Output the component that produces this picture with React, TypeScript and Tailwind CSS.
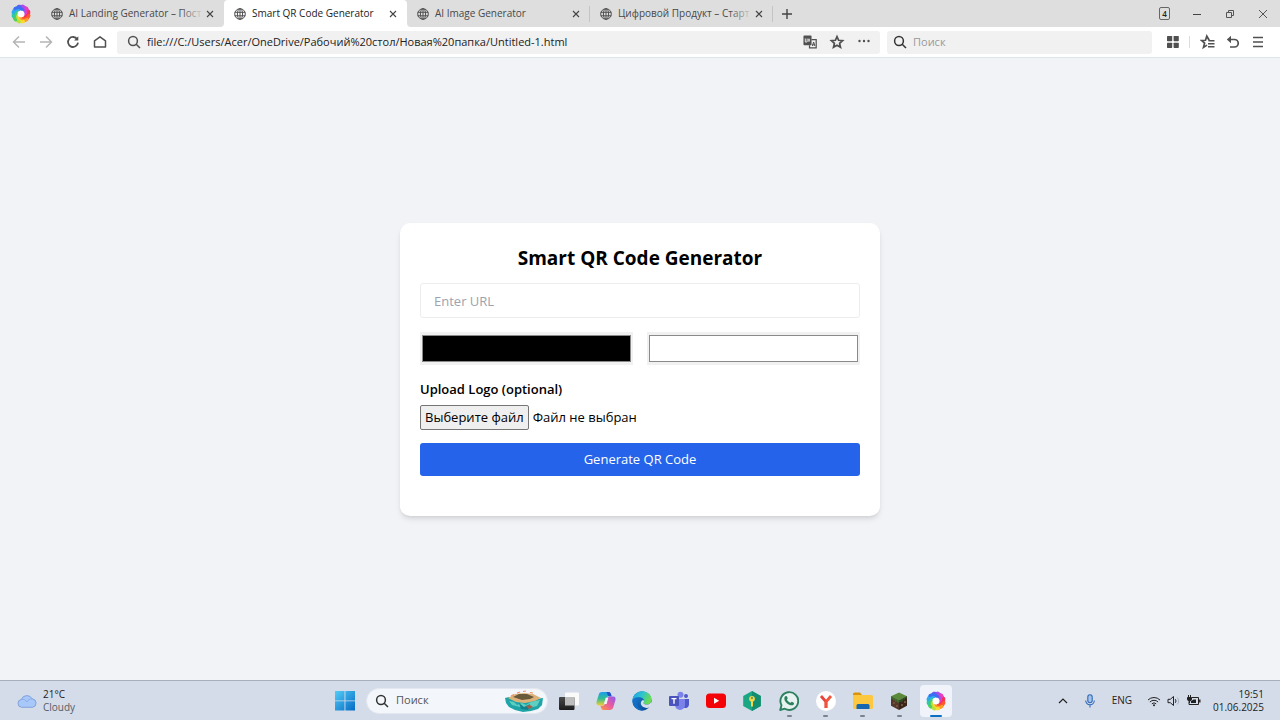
import { useRef, useState } from 'react'
import type { ReactNode } from 'react'

interface TabProps {
  title: string
  active?: boolean
  divider?: boolean
  fade?: boolean
}

function Globe() {
  return (
    <svg viewBox="0 0 12 12" className="w-3 h-3 shrink-0" fill="none" stroke="#505050" strokeWidth="1">
      <circle cx="6" cy="6" r="5.3" />
      <ellipse cx="6" cy="6" rx="2.6" ry="5.3" />
      <path d="M6 .7v10.6M.7 4.3h10.6M.7 7.8h10.6" />
    </svg>
  )
}

const swirlColors = ['#6a5cf0', '#b04be8', '#e83cc0', '#f5305a', '#fb5a2c', '#fc9a29', '#f8dc2e', '#b5e03c', '#4fd05c', '#2fc7a8', '#2fa8f0', '#3d6df2']

function Swirl({ id, className }: { id: string; className: string }) {
  return (
    <svg viewBox="0 0 20 20" className={className}>
      <defs>
        <filter id={id} x="-10%" y="-10%" width="120%" height="120%">
          <feGaussianBlur stdDeviation="0.5" />
        </filter>
      </defs>
      <g filter={`url(#${id})`} fill="none" strokeLinecap="round" strokeWidth="3.2">
        {swirlColors.map((c, i) => (
          <path key={c} stroke={c} transform={`rotate(${i * 30} 10 10)`} d="M7.600 2.300C10.600 2 12.600 3.300 13.200 6.300" />
        ))}
      </g>
      <circle cx="10" cy="10" r="3.300" fill="#fff" filter={`url(#${id})`} />
    </svg>
  )
}

function SearchIcon({ className }: { className: string }) {
  return (
    <svg viewBox="0 0 14 14" className={className} fill="none" stroke="currentColor" strokeWidth="1.5">
      <circle cx="6" cy="6" r="4.4" />
      <path d="M9.2 9.2l3.8 3.8" />
    </svg>
  )
}

function Tab({ title, active, divider, fade }: TabProps) {
  return (
    <div className={`relative flex items-center w-[183px] h-full pl-[10px] pr-2 ${active ? 'bg-white rounded-t-[4px]' : ''}`}>
      <Globe />
      <button className={`relative ml-[6px] flex-1 h-full text-left whitespace-nowrap text-[10px] ${active ? 'text-[#222]' : 'text-[#484848]'}`}>
        {title}
        {fade && <span className="absolute right-0 top-0 h-full w-6 bg-linear-to-r from-transparent to-[#dedede]" />}
      </button>
      <button aria-label="Close tab" className="w-3 h-3 flex items-center justify-center">
        <svg viewBox="0 0 8 8" className="w-2 h-2" stroke="#444" strokeWidth="1.1"><path d="M1 1l6 6M7 1L1 7" /></svg>
      </button>
      {divider && <span className="absolute right-0 top-[6px] h-4 w-px bg-[#c4c4c4]" />}
    </div>
  )
}

function TabBar() {
  return (
    <div className="flex h-[27px] bg-white">
      <div className="flex items-center bg-[#dedede] rounded-br-[4px]">
        <div className="w-[41px] flex justify-center"><Swirl id="swirl-tab" className="w-5 h-5" /></div>
        <Tab title="AI Landing Generator – Пост" fade />
      </div>
      <div className="bg-linear-to-b from-[#dedede] from-50% to-white to-50%">
        <Tab title="Smart QR Code Generator" active />
      </div>
      <div className="flex flex-1 items-center bg-[#dedede] rounded-bl-[4px]">
        <Tab title="AI Image Generator" divider />
        <Tab title="Цифровой Продукт – Старт" divider fade />
        <button aria-label="New tab" className="ml-2">
          <svg viewBox="0 0 12 12" className="w-3 h-3" stroke="#444" strokeWidth="1.4"><path d="M6 1v10M1 6h10" /></svg>
        </button>
        <div className="ml-auto flex items-center pr-[11px] gap-[21px]">
          <button className="w-[11px] h-[13px] border border-[#666] rounded-[2px] flex items-center justify-center text-[8px] leading-none font-semibold text-[#222]">4</button>
          <button aria-label="Minimize">
            <svg viewBox="0 0 12 12" className="w-3 h-3" stroke="#444"><path d="M2 6.500h8" /></svg>
          </button>
          <button aria-label="Restore">
            <svg viewBox="0 0 12 12" className="w-3 h-3" fill="none" stroke="#555"><path d="M2.500 4.500h5v5h-5zM4.500 4.500v-2h5v5h-2" /></svg>
          </button>
          <button aria-label="Close">
            <svg viewBox="0 0 12 12" className="w-3 h-3" stroke="#555"><path d="M2 2l8 8M10 2l-8 8" /></svg>
          </button>
        </div>
      </div>
    </div>
  )
}

function ToolButton({ label, color = 'text-[#505050]', children }: { label: string; color?: string; children: ReactNode }) {
  return (
    <button aria-label={label} className={`w-4 h-4 shrink-0 ${color}`}>
      <svg viewBox="0 0 16 16" className="w-4 h-4" fill="none" stroke="currentColor" strokeWidth="1.5">{children}</svg>
    </button>
  )
}

function Toolbar() {
  const [address, setAddress] = useState('file:///C:/Users/Acer/OneDrive/Рабочий%20стол/Новая%20папка/Untitled-1.html')
  return (
    <div className="flex items-center h-[31px] bg-white border-b border-[#dce4ec] pl-[11px] pr-[14px]">
      <div className="flex gap-[11px]">
        <ToolButton label="Back" color="text-[#b5b5b5]"><path d="M14 8H2.500M8 2.500L2.500 8L8 13.500" /></ToolButton>
        <ToolButton label="Forward" color="text-[#b5b5b5]"><path d="M2 8h11.500M8 2.500L13.500 8L8 13.500" /></ToolButton>
        <ToolButton label="Reload">
          <path d="M12.200 5.200A5 5 0 1 0 13 8.600" strokeWidth="1.8" />
          <path d="M13.300 2.200v4.200H9.100z" fill="currentColor" stroke="none" />
        </ToolButton>
        <ToolButton label="Home"><path d="M2.500 13V6.800L8 2.800l5.500 4V13z" strokeLinejoin="round" /></ToolButton>
      </div>
      <div className="ml-[9px] flex flex-1 items-center h-[23px] bg-[#f1f1f1] rounded-[3px] pl-[10px] pr-2">
        <SearchIcon className="w-[14px] h-[14px] text-[#505050]" />
        <input
          aria-label="Address"
          className="ml-[6px] flex-1 min-w-0 bg-transparent outline-none text-[11px] text-[#222]"
          value={address}
          onChange={e => setAddress(e.target.value)}
        />
        <div className="flex gap-[11px]">
          <ToolButton label="Translate">
            <path d="M2.200 2.200h6.600v8.300H2.200z" fill="currentColor" strokeLinejoin="round" />
            <path d="M9.500 5.600h4.700v8.200H7.500v-2.600" strokeWidth="1.200" />
            <path d="M3.300 4.500v3.500h1.800v-3.500M7 4.500v3.500M6 6h2" stroke="#f1f1f1" strokeWidth=".9" />
            <path d="M10.300 12l1.300-4 1.300 4M10.700 10.800h2" strokeWidth="1" />
          </ToolButton>
          <ToolButton label="Bookmark"><path d="M8 2.600l1.600 3.700 4 .4-3 2.700.9 3.900L8 11.200l-3.500 2.100.9-3.900-3-2.700 4-.4z" strokeWidth="1.700" /></ToolButton>
          <ToolButton label="More">
            <g fill="currentColor" stroke="none"><circle cx="3.500" cy="7" r="1.200" /><circle cx="8" cy="7" r="1.200" /><circle cx="12.500" cy="7" r="1.200" /></g>
          </ToolButton>
        </div>
      </div>
      <div className="ml-[7px] flex items-center w-[265px] h-[23px] bg-[#f1f1f1] rounded-[3px] pl-[6px]">
        <SearchIcon className="w-[14px] h-[14px] text-[#333]" />
        <input aria-label="Search the web" placeholder="Поиск" className="ml-[6px] flex-1 min-w-0 bg-transparent outline-none text-[11px] placeholder:text-[#999]" />
      </div>
      <div className="ml-[13px] flex items-center">
        <ToolButton label="Apps">
          <g fill="currentColor" stroke="none">
            <rect x="2" y="2" width="5.200" height="5.200" rx=".6" /><rect x="8.600" y="2" width="5.200" height="5.200" rx=".6" />
            <rect x="2" y="8.700" width="5.200" height="5.200" rx=".6" /><rect x="8.600" y="8.700" width="5.200" height="5.200" rx=".6" />
          </g>
        </ToolButton>
        <span className="ml-2 mr-[10px] w-px h-3 bg-[#ddd]" />
        <div className="flex gap-[9px]">
          <ToolButton label="Favorites">
            <path d="M9.200 6.300L6.800 2.200 5.500 6.300 1.600 6.500l3 2.600-1.100 4.300 3.500-2.300" strokeWidth="1.700" />
            <path d="M8.500 6.700h6M8 9.700h6.500M8 12.700h6.500" strokeWidth="1.400" />
          </ToolButton>
          <ToolButton label="Undo">
            <path d="M4 5.500h5.500a3.700 3.700 0 0 1 0 7.500H5" strokeWidth="1.700" />
            <path d="M6 1.800v7.400L1.800 5.500z" fill="currentColor" stroke="none" />
          </ToolButton>
          <ToolButton label="Menu"><path d="M3 3.500h10M3 8h10M3 12.500h10" /></ToolButton>
        </div>
      </div>
    </div>
  )
}

function QrCard() {
  const [url, setUrl] = useState('')
  const [dark, setDark] = useState('#000000')
  const [light, setLight] = useState('#ffffff')
  const [fileName, setFileName] = useState('')
  const fileRef = useRef<HTMLInputElement>(null)

  const colorClass =
    'flex-1 min-w-0 h-[33px] appearance-none border border-[#f1f1f1] bg-[#f1f1f1] [&::-webkit-color-swatch-wrapper]:px-px [&::-webkit-color-swatch-wrapper]:py-[2px] [&::-webkit-color-swatch]:border [&::-webkit-color-swatch]:border-[#8a8a8a] [&::-webkit-color-swatch]:rounded-none'

  return (
    <div className="w-full max-w-[480px] bg-white rounded-[10px] shadow-md p-5 text-[13px] text-black">
      <h1 className="pt-[2px] text-center text-[19px] leading-[26px] font-bold">Smart QR Code Generator</h1>
      <input
        type="text"
        aria-label="URL"
        placeholder="Enter URL"
        className="mt-3 block w-full h-[35px] border border-[#ededed] rounded-[3px] px-[13px] pt-[2px] outline-none placeholder:text-[#9ca3af]"
        value={url}
        onChange={e => setUrl(e.target.value)}
      />
      <div className="mt-[14px] flex gap-[14px]">
        <input type="color" aria-label="Code color" className={colorClass} value={dark} onChange={e => setDark(e.target.value)} />
        <input type="color" aria-label="Background color" className={colorClass} value={light} onChange={e => setLight(e.target.value)} />
      </div>
      <label htmlFor="logo" className="mt-[14px] block leading-5 font-semibold">Upload Logo (optional)</label>
      <div className="mt-[6px] flex items-center">
        <input ref={fileRef} id="logo" type="file" className="hidden" onChange={e => setFileName(e.target.files?.[0]?.name ?? '')} />
        <button
          onClick={() => fileRef.current?.click()}
          className="h-[25px] px-1 pt-[2px] border border-[#767676] rounded-[2px] bg-[#efefef]"
        >
          Выберите файл
        </button>
        <span className="ml-1 pt-[2px]">{fileName || 'Файл не выбран'}</span>
      </div>
      <button className="mt-[13px] mb-5 block w-full h-[33px] pt-[2px] rounded-[3px] bg-[#2563eb] text-white">Generate QR Code</button>
    </div>
  )
}

function TaskItem({ label, running, active, children }: { label: string; running?: boolean; active?: boolean; children: ReactNode }) {
  return (
    <button aria-label={label} className={`relative w-8 h-8 flex items-center justify-center rounded-[4px] ${active ? 'bg-[#f0f3f9]' : ''}`}>
      {children}
      {running && <span className="absolute bottom-0 w-[5px] h-[2px] rounded-full bg-[#7d828c]" />}
      {active && <span className="absolute bottom-0 w-3 h-[2px] rounded-full bg-[#0b6fc4]" />}
    </button>
  )
}

function TaskbarApps() {
  return (
    <div className="flex justify-between w-[399px]">
      <TaskItem label="Task view">
        <svg viewBox="0 0 20 20" className="w-5 h-5">
          <defs>
            <linearGradient id="tv" x1="0" y1="0" x2="0" y2="1"><stop stopColor="#4a4a4a" /><stop offset="1" stopColor="#1c1c1c" /></linearGradient>
          </defs>
          <rect x="6" y="1.500" width="14" height="13" rx="1" fill="#fafafa" />
          <rect x="0" y="6" width="15.500" height="13" rx="1" fill="url(#tv)" />
          <path d="M6 6h9.500v8.500H6z" fill="#bdbdbd" />
        </svg>
      </TaskItem>
      <TaskItem label="Copilot">
        <svg viewBox="0 0 20 20" className="w-5 h-5">
          <defs>
            <linearGradient id="cp-a" x1="0" y1="0" x2="0" y2="1"><stop stopColor="#1b9df0" /><stop offset=".5" stopColor="#35bd92" /><stop offset="1" stopColor="#f3cf2f" /></linearGradient>
            <linearGradient id="cp-b" x1="1" y1="0" x2="0" y2="1"><stop stopColor="#8a5cf0" /><stop offset=".5" stopColor="#ea5aa0" /><stop offset="1" stopColor="#fb9a3c" /></linearGradient>
          </defs>
          <path d="M6.200 1h6.300c1.300 0 2 .8 2.400 2l.7 2.300h-2.400c-1.500 0-2.300.8-2.700 2.200L9 12c-.5 1.600-1.300 2.400-3 2.400H2.800C.6 14.400 0 12.600.6 10.600L2.800 3.400C3.300 1.800 4.400 1 6.200 1z" fill="url(#cp-a)" />
          <path d="M13.800 19H7.500c-1.300 0-2-.8-2.400-2l-.7-2.300h2c1.500 0 2.300-.8 2.700-2.200L10.500 8c.5-1.600 1.500-2.600 3.200-2.600h3.500c2.200 0 2.800 1.800 2.200 3.800l-2.200 7.400c-.5 1.600-1.600 2.400-3.400 2.400z" fill="url(#cp-b)" />
          <path d="M10 1h2.500c1.300 0 2 .8 2.400 2l.7 2.300h-2.400C11.400 5.300 11.400 1 10 1z" fill="#2450c8" />
          <path d="M9.700 6.800h2.600L10.600 13H7.900z" fill="#f2f4fa" />
        </svg>
      </TaskItem>
      <TaskItem label="Edge">
        <svg viewBox="0 0 20 20" className="w-5 h-5">
          <defs>
            <linearGradient id="edge-a" x1="0" y1="0" x2="1" y2=".4"><stop stopColor="#1e9be8" /><stop offset=".5" stopColor="#2cc3d0" /><stop offset="1" stopColor="#6bdc53" /></linearGradient>
            <linearGradient id="edge-b" x1="0" y1="0" x2=".7" y2="1"><stop stopColor="#1a86d9" /><stop offset="1" stopColor="#0d4b9a" /></linearGradient>
          </defs>
          <circle cx="10" cy="10" r="9.700" fill="url(#edge-b)" />
          <path d="M.4 9C1 3.800 5 .3 10 .3c5.700 0 9.700 3.900 9.700 8.300 0 3-2.300 5-5.200 5-1.800 0-3-.7-3-1.500 0-.6.700-.8.700-2.200 0-1.800-1.800-3.700-4.700-3.700C4 6.200 1.200 7.500.4 9z" fill="url(#edge-a)" />
          <path d="M11.500 12.100c0 .8 1.200 1.500 3 1.500 2.300 0 4.200-1.200 4.900-3.200L20 14l-2 2.200c-2.800 1.300-6.300.7-8.200-1.400-1.400-1.600-1.300-3.600.2-5.200 1-.9 2.200-.3 2.200.5 0 1.200-.7 1.400-.7 2z" fill="#d6deec" />
          <path d="M.4 9C2 6.600 5 6 7.500 6.200 4.900 7.500 3.700 11 5.300 14.300c1.200 2.600 3.400 4.500 6.300 5.200C5.600 20.200.2 15.600.4 9z" fill="#1172ca" opacity=".75" />
        </svg>
      </TaskItem>
      <TaskItem label="Teams">
        <svg viewBox="0 0 20 20" className="w-5 h-5">
          <circle cx="17" cy="5" r="2" fill="#5059c9" />
          <circle cx="11.500" cy="3.700" r="3" fill="#7b83eb" />
          <path d="M14 8h6v5.500a3.500 3.500 0 0 1-5 3.200z" fill="#5059c9" />
          <path d="M6 8h10v6a5 5 0 0 1-10 0z" fill="#7b83eb" />
          <rect x="0" y="5" width="10" height="10" rx="1" fill="#4b53bc" />
          <path d="M2.500 7.600h5M5 7.600v5.200" stroke="#fff" strokeWidth="1.400" />
        </svg>
      </TaskItem>
      <TaskItem label="YouTube">
        <svg viewBox="0 0 20 20" className="w-5 h-5">
          <rect x="0" y="2.500" width="20" height="14.500" rx="3.500" fill="#f40407" />
          <path d="M8 6.800v6l5.200-3z" fill="#fff" />
        </svg>
      </TaskItem>
      <TaskItem label="Password manager">
        <svg viewBox="0 0 20 20" className="w-5 h-5">
          <path d="M10 0l8.800 5v10L10 20l-8.800-5V5z" fill="#1ba784" />
          <path d="M10 0l8.800 5v10L10 20z" fill="#128d70" />
          <circle cx="10" cy="7.800" r="2.900" fill="#f3d64a" />
          <path d="M9 10h2v5l-1 1-1-1z" fill="#f3d64a" />
          <circle cx="10" cy="7" r=".9" fill="#3a8060" />
        </svg>
      </TaskItem>
      <TaskItem label="WhatsApp" running>
        <svg viewBox="0 0 20 20" className="w-5 h-5">
          <path d="M1.200 19l1.300-4.700A8.900 8.900 0 1 1 5.800 17.700z" fill="#e8f2f0" stroke="#2c8060" strokeWidth="1.900" strokeLinejoin="round" />
          <path d="M6.400 5.300c.6-.6 1.300-.5 1.600.2l.7 1.700c.1.500-.8 1.100-.7 1.500.7 1.400 1.900 2.500 3.400 3.100.5.100 1-1.200 1.500-1l1.800.9c.6.4.3 1.600-.4 2.200-2.500 2-9.900-3-8.900-7.200.1-.600.500-1.100 1-1.400z" fill="#2c8060" />
        </svg>
      </TaskItem>
      <TaskItem label="Yandex" running>
        <svg viewBox="0 0 20 20" className="w-5 h-5">
          <circle cx="10" cy="10" r="10" fill="#fff" />
          <path d="M5 5l5 5.800V17" fill="none" stroke="#e8453c" strokeWidth="2.800" />
          <path d="M15 5l-5 5.800V17" fill="none" stroke="#f0553c" strokeWidth="2.800" />
        </svg>
      </TaskItem>
      <TaskItem label="File Explorer" running>
        <svg viewBox="0 0 20 20" className="w-5 h-5">
          <path d="M0 3a1.500 1.500 0 0 1 1.500-1.500H7L9 4H0z" fill="#d9930c" />
          <path d="M0 4h18.500A1.500 1.500 0 0 1 20 5.500v11a1.500 1.500 0 0 1-1.500 1.500h-17A1.500 1.500 0 0 1 0 16.500z" fill="#fcc840" />
          <path d="M3.500 18v-3.500A1.500 1.500 0 0 1 5 13h10a1.500 1.500 0 0 1 1.500 1.500V18z" fill="#1766b0" />
        </svg>
      </TaskItem>
      <TaskItem label="Minecraft" running>
        <svg viewBox="0 0 20 20" className="w-5 h-5">
          <path d="M10 1.500l8 3.800L10 9.500 2 5.300z" fill="#5b8a3a" />
          <path d="M2 5.300l8 4.200V19l-8-4.300z" fill="#54382a" />
          <path d="M18 5.300l-8 4.200V19l8-4.300z" fill="#3a251b" />
          <path d="M2 5.300l8 4.200v2.300l-2-.3v-1L6 10.800V9.200l-2 .3V8l-2 .2z" fill="#3f6a2b" />
          <path d="M18 5.300l-8 4.200v2.300l2-1.200v1l2-1.800V8.500l2 .3V7.500l2-.2z" fill="#2f4f22" />
          <path d="M4 11h2v2H4zM12 13h2v2h-2zM15 10h2v2h-2zM7 14h2v2H7z" fill="#73503a" />
        </svg>
      </TaskItem>
      <TaskItem label="Browser" active><Swirl id="swirl-task" className="w-5 h-5" /></TaskItem>
    </div>
  )
}

function Taskbar() {
  return (
    <footer className="flex items-center h-10 border-t border-[#a9afba] bg-[#d5dce9] pl-[17px] pr-4 text-[10px] text-[#222]">
      <div className="flex flex-1 items-center gap-[6px]">
        <svg viewBox="0 0 20 14" className="w-5 h-[14px]">
          <path d="M4.500 13.300a4 4 0 0 1-.2-7.900A6 6 0 0 1 15.200 4.800a4.300 4.300 0 0 1 .4 8.500z" fill="#a9c8fa" stroke="#7395d4" strokeWidth=".8" />
          <path d="M4.300 5.400c2.600-.6 4.600.700 5.500 2.600 1.600-2.400 3.300-3.200 5.400-3.200" fill="none" stroke="#87a8e2" strokeWidth=".9" />
        </svg>
        <div className="leading-[13px]">
          <p>21°C</p>
          <p className="text-[#555b66]">Cloudy</p>
        </div>
      </div>
      <div className="flex items-center gap-[5px]">
        <button aria-label="Start" className="w-8 h-8 flex items-center justify-center">
          <svg viewBox="0 0 20 20" className="w-5 h-5">
            <defs>
              <linearGradient id="win" x1="0" y1="0" x2="1" y2="1"><stop stopColor="#52cdf8" /><stop offset="1" stopColor="#0669c4" /></linearGradient>
            </defs>
            <path d="M0 0h9.500V9.500H0zM10.400 0H20V9.500h-9.600zM0 10.300h9.500V19.500H0zM10.400 10.300H20V19.500h-9.600z" fill="url(#win)" />
          </svg>
        </button>
        <div className="flex items-center w-[182px] h-[26px] rounded-full bg-[#f3f6fb] border border-[#e3e8f0] pl-2 pr-1">
          <SearchIcon className="w-[14px] h-[14px] text-[#333]" />
          <input aria-label="Search" placeholder="Поиск" className="ml-[7px] flex-1 min-w-0 bg-transparent outline-none text-[11px] placeholder:text-[#555]" />
          <svg viewBox="0 0 38 22" className="w-[38px] h-[22px]">
            <path d="M0 8l4-1 4 2 6 3 8-1 8-2 8-1-1 7-4 4-7 2-8 1-8-2-6-3-3-4z" fill="#1fa5a8" />
            <path d="M3 8l7-4 9-1 9 1 8 4-6 3-10 2-9-1z" fill="#dcb27a" />
            <path d="M8 7l6-3h8l7 3-4 2-8 1z" fill="#6a5a3c" />
            <path d="M4 11l5 1 3 3 5-2 4 2 5-3 9-2-3 6-8 2-9-1-8-2z" fill="#5fcfc2" />
            <path d="M14 13l5 4 6-3-2 6-7-1z" fill="#11808c" />
            <path d="M21 16l4-1 3 2-4 2z" fill="#a0604a" />
            <path d="M12 3l3-1M18 1.500l3-.5M25 2.500l3 .5M6 6l3-1.500" stroke="#ee8f66" strokeWidth="1.200" />
          </svg>
        </div>
        <TaskbarApps />
      </div>
      <div className="flex flex-1 items-center justify-end">
        <button aria-label="Hidden icons">
          <svg viewBox="0 0 10 10" className="w-[10px] h-[10px]" fill="none" stroke="#222" strokeWidth="1.200"><path d="M1 7l4-4 4 4" /></svg>
        </button>
        <svg viewBox="0 0 12 14" className="ml-4 w-3 h-[14px]" fill="none" stroke="#2f6ab8" strokeWidth="1.100">
          <rect x="3.800" y=".8" width="4.400" height="8" rx="2.200" fill="#a5c4ea" />
          <path d="M1.700 6.500a4.300 4.300 0 0 0 8.600 0M6 10.800V13.500" />
        </svg>
        <span className="ml-4">ENG</span>
        <button aria-label="Quick settings" className="ml-[15px] flex items-center gap-[6px]">
          <svg viewBox="0 0 14 12" className="w-[14px] h-3" fill="none" stroke="#222">
            <path d="M1 5a8.500 8.500 0 0 1 12 0M2.900 7a5.800 5.800 0 0 1 8.200 0M4.800 8.900a3.100 3.100 0 0 1 4.400 0" />
            <circle cx="7" cy="10.300" r="1" fill="#222" stroke="none" />
          </svg>
          <svg viewBox="0 0 14 12" className="w-[14px] h-3" fill="none" stroke="#222">
            <path d="M1 4.300h2.300L6.500 1.500v9L3.300 7.700H1z" strokeLinejoin="round" />
            <path d="M8.300 4.200a2.800 2.800 0 0 1 0 3.600" />
            <path d="M10.200 2.500a5 5 0 0 1 0 7" stroke="#aab0bd" />
          </svg>
          <svg viewBox="0 0 14 12" className="w-[14px] h-3" fill="none" stroke="#222">
            <path d="M5 2.500h6.500v7H2V6.500" />
            <path d="M12.800 4.500v3" strokeWidth="1.400" />
            <path d="M6.500 4.500H9v3.500H4V6z" fill="#222" stroke="none" />
            <path d="M1.500 0v2M3.500 0v2M.5 2.500h4v1.500a2 2 0 0 1-4 0zM2.500 6v2" fill="#222" />
          </svg>
        </button>
        <div className="ml-3 text-right leading-[13px]">
          <p>19:51</p>
          <p>01.06.2025</p>
        </div>
      </div>
    </footer>
  )
}

export default function App() {
  return (
    <div className="min-h-screen flex flex-col bg-[#f2f3f6] font-['Open_Sans','Noto_Sans',sans-serif]">
      <header>
        <TabBar />
        <Toolbar />
      </header>
      <main className="flex-1 flex items-center justify-center">
        <QrCard />
      </main>
      <Taskbar />
    </div>
  )
}
